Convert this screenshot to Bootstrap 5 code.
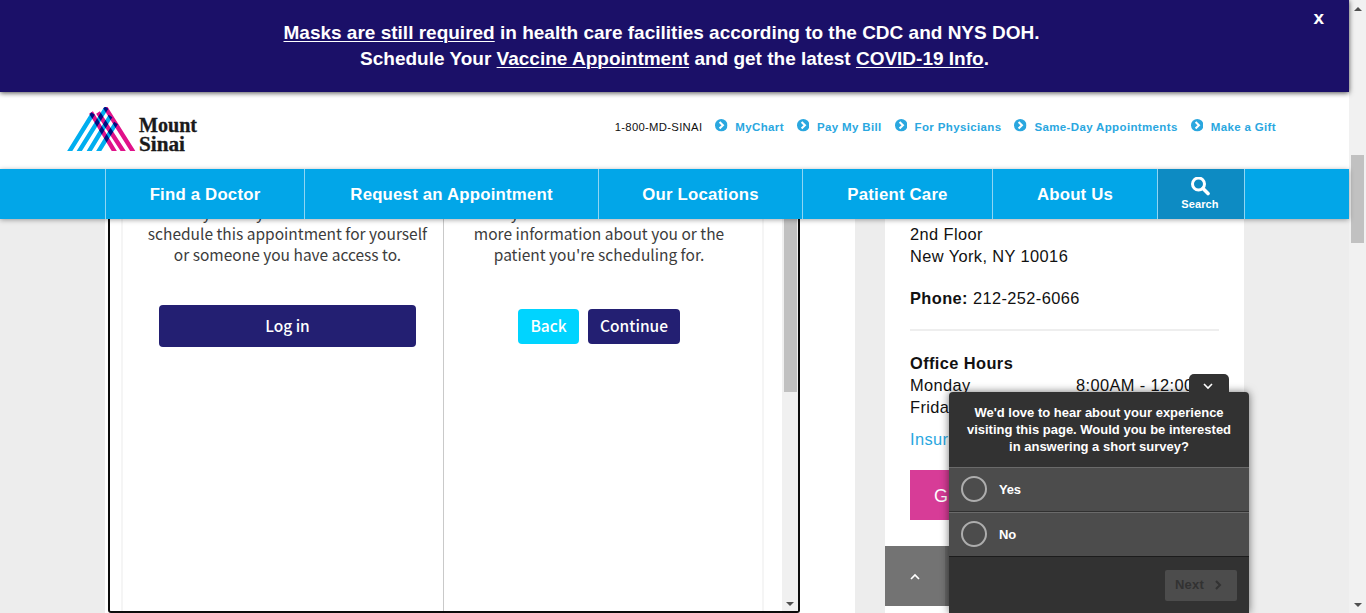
<!DOCTYPE html>
<html lang="en">
<head>
<meta charset="utf-8">
<meta name="viewport" content="width=device-width, initial-scale=1">
<title>Mount Sinai</title>
<link href="https://cdn.jsdelivr.net/npm/bootstrap@5.3.0/dist/css/bootstrap.min.css" rel="stylesheet">
<style>
body{font-family:"Liberation Sans",Arial,sans-serif;font-size:16px;line-height:22px;color:#111;height:613px;overflow:hidden;background:#ededed}
a{text-decoration:none;color:#2aa7df}
.page{width:1349px}
.banner{height:92px;background:#1b1068;color:#fff;font-size:19px;line-height:26px;font-weight:700;padding-top:20px;box-shadow:0 1px 5px rgba(0,0,0,.7);z-index:6}
.banner .first{padding-right:26px}
.banner a{color:#fff;text-decoration:underline;text-decoration-thickness:1px;text-underline-offset:2px}
.banner .shut{right:25px;top:8px;font-size:19px;line-height:20px}
.masthead{height:77px;padding:14px 73px 0 65px;z-index:4}
.quick{font-size:11.5px;line-height:16px;font-weight:700;letter-spacing:.36px;padding-top:13px}
.quick svg{width:12.500px;height:12.500px;margin-right:7.500px;display:block}
.quick .phone{font-weight:400;font-size:11.3px;letter-spacing:.3px}
.quick .ql{margin-left:13px}
.mainnav{height:50px;background:#02a6e8;padding-left:105px;box-shadow:0 1px 5px rgba(0,0,0,.35);z-index:5}
.mainnav a{color:#fff;font-weight:700;font-size:16.800px;letter-spacing:.2px;border-left:1px solid #8fd5f3;padding-top:1px}
.mainnav .find{background:#0d8bc3;font-size:11px;letter-spacing:.1px;line-height:14px;border-right:1px solid #8fd5f3;padding-right:2px}
.n1{width:199px}.n2{width:294px}.n3{width:204px}.n4{width:190px}.n5{width:165px}.n6{width:88px}
.content-area{height:394px;padding-left:105px}
.main-col{width:750px;padding-left:3px}
.frame{width:692px;border:2px solid #0c0c0c;border-top:0;border-radius:0 0 3px 3px;font-family:"Noto Sans CJK JP",sans-serif;font-size:15.5px;line-height:21px;color:#3c3c3c}
.sheet{width:643px;margin-left:11px;border:solid #f5f5f5;border-width:0 2px}
.choice{text-align:center}
.choice p{margin:-17px 0 0;white-space:nowrap}
.c1{width:321px;border-right:1px solid #c9c9c9}
.c1 p{padding-left:9px}
.c2{width:318px;padding-right:8px}
.go{background:#231f72;color:#fff;border-radius:4px;display:flex;align-items:center;justify-content:center;font-weight:500;padding-bottom:1px}
.go.login{width:257px;height:42px;margin:40px auto 0 36px}
.go.back{width:61px;height:35px;background:#00d4ff;padding-bottom:2px}
.go.next{width:92px;height:35px;padding-bottom:2px}
.pair{margin-top:44px;gap:9px}
.innerbar{width:16px;background:#f0f0f0;margin-left:auto}
.innerbar i{display:block;width:13px;height:173px;margin-left:2px;background:#c1c1c1}
.side{width:359px;margin-left:30px;font-size:16.400px;letter-spacing:.4px}
.side-body{padding:4px 25px 0;height:327px}
.rule{height:2px;background:#eee;margin:20px 0 21px}
.pink{width:160px;height:50px;background:#d73c97;color:#fff;font-size:18px;margin-top:20px;padding:15px 24px}
.uptab{height:60px;background:#666}
.uptab div{width:60px;height:60px;background:#737373}
.survey{left:949px;top:392px;width:300px;height:221px;background:#323232;border-radius:4px 4px 0 0;box-shadow:0 0 8px rgba(0,0,0,.55);z-index:8;color:#fff;font-size:13px;font-weight:700}
.survey .flap{right:20px;top:-18px;width:40px;height:20px;padding-right:2px;border-radius:5px 5px 0 0;background:#323232}
.survey .ask{height:75px;padding-top:12px;line-height:17px;text-align:center}
.opt{height:45px;background:#4c4c4c;border-top:1px solid #6a6a6a;border-bottom:1px solid #303030;padding:0 0 1px 12px}
.opt i{width:26px;height:26px;border:2px solid #adadad;border-radius:50%;margin-right:12px}
.opt span{padding-top:2px;letter-spacing:-.2px}
.opt+.opt{border-bottom-color:#1c1c1c}
.fwd{width:72px;height:31px;background:#4c4c4c;color:#323232;border-radius:2px;margin:13px 12px 0 auto;padding:0 15px 1px 10px;letter-spacing:.2px}
.pagebar{width:17px;height:613px;background:#f1f1f1;padding:6px 2px 5px}
.pagebar i{display:block;width:13px;height:88px;background:#c1c1c1}
</style>
<script src="https://cdn.jsdelivr.net/npm/bootstrap@5.3.0/dist/js/bootstrap.bundle.min.js"></script>
</head>
<body class="d-flex">
<svg class="d-none"><symbol id="go" viewBox="0 0 12 12"><circle cx="6" cy="6" r="6" fill="#2aa7df"/><path d="M4.4 2.8 7.6 6 4.4 9.2" fill="none" stroke="#fff" stroke-width="2"/></symbol></svg>
<div class="page flex-shrink-0">
  <div class="banner position-relative text-center">
    <div class="first"><a href="#">Masks are still required</a> in health care facilities according to the CDC and NYS DOH.</div>
    <div>Schedule Your <a href="#">Vaccine Appointment</a> and get the latest <a href="#">COVID-19 Info</a>.</div>
    <span class="shut position-absolute">x</span>
  </div>
  <header class="masthead bg-white d-flex justify-content-between position-relative">
    <svg width="140" height="50" viewBox="65 106 140 50">
      <clipPath id="peaks"><path d="M60 107h80v44H60z"/></clipPath>
      <g fill="none" stroke-width="4.4" clip-path="url(#peaks)">
        <path stroke="#e0128a" d="M91 112.500 115.500 153M98 112.500 124.500 153M105 107 134 153"/>
        <path stroke="#00aeef" style="mix-blend-mode:multiply" d="M68.500 153 93 113.500M78 153 106.500 107.500M88 153 110.500 116M97.500 153 116 123"/>
      </g>
      <g font-family="'Liberation Serif',serif" font-weight="700" font-size="20" fill="#1a1a1a" stroke="#1a1a1a" stroke-width=".3"><text x="139" y="132" textLength="58" lengthAdjust="spacingAndGlyphs">Mount</text><text x="139" y="151" textLength="46" lengthAdjust="spacingAndGlyphs">Sinai</text></g>
    </svg>
    <div class="quick d-flex align-items-start">
      <span class="phone">1-800-MD-SINAI</span>
      <a href="#" class="ql d-flex"><svg><use href="#go"/></svg>MyChart</a>
      <a href="#" class="ql d-flex"><svg><use href="#go"/></svg>Pay My Bill</a>
      <a href="#" class="ql d-flex"><svg><use href="#go"/></svg>For Physicians</a>
      <a href="#" class="ql d-flex"><svg><use href="#go"/></svg>Same-Day Appointments</a>
      <a href="#" class="ql d-flex"><svg><use href="#go"/></svg>Make a Gift</a>
    </div>
  </header>
  <nav class="mainnav d-flex position-relative">
    <a href="#" class="n1 d-flex align-items-center justify-content-center">Find a Doctor</a>
    <a href="#" class="n2 d-flex align-items-center justify-content-center">Request an Appointment</a>
    <a href="#" class="n3 d-flex align-items-center justify-content-center">Our Locations</a>
    <a href="#" class="n4 d-flex align-items-center justify-content-center">Patient Care</a>
    <a href="#" class="n5 d-flex align-items-center justify-content-center">About Us</a>
    <a href="#" class="n6 find d-flex flex-column align-items-center pt-2"><svg width="20" height="20" viewBox="0 0 20 20" fill="none" stroke="#fff"><circle cx="8.500" cy="7" r="6" stroke-width="3"/><path d="m13 11.500 5 5" stroke-width="3.600" stroke-linecap="round"/></svg>Search</a>
  </nav>
  <div class="content-area d-flex">
    <main class="main-col bg-white">
      <div class="frame h-100 d-flex">
        <div class="sheet d-flex">
          <section class="choice c1"><p>you may be able to also<br>schedule this appointment for yourself<br>or someone you have access to.</p><div class="go login">Log in</div></section>
          <section class="choice c2"><p>you will need to enter all<br>more information about you or the<br>patient you're scheduling for.</p>
            <div class="pair d-flex justify-content-center"><div class="go back">Back</div><div class="go next">Continue</div></div></section>
        </div>
        <div class="innerbar d-flex flex-column justify-content-between pb-1"><i></i><svg class="mx-auto" width="8" height="5"><path d="M0 0h8L4 4z" fill="#505050"/></svg></div>
      </div>
    </main>
    <aside class="side bg-white">
      <div class="side-body">
        <div>2nd Floor</div><div>New York, NY 10016</div>
        <div style="margin-top:20px"><b>Phone:</b> 212-252-6066</div>
        <div class="rule"></div>
        <b class="d-block">Office Hours</b>
        <div class="d-flex justify-content-between"><span>Monday</span><span>8:00AM - 12:00PM</span></div>
        <div>Friday</div>
        <a href="#" class="d-block" style="margin-top:10px">Insurance</a>
        <div class="pink">G</div>
      </div>
      <div class="uptab"><div class="d-flex align-items-center justify-content-center"><svg width="10" height="7" fill="none" stroke="#fff" stroke-width="1.700"><path d="m1 6 4-4 4 4"/></svg></div></div>
    </aside>
  </div>
</div>
<div class="pagebar d-flex flex-column"><svg class="mx-auto" width="8" height="5"><path d="M0 5h8L4 1z" fill="#505050"/></svg><i style="margin-top:144px"></i><svg class="mx-auto mt-auto" width="8" height="5"><path d="M0 0h8L4 4z" fill="#505050"/></svg></div>
<div class="survey position-absolute">
  <div class="flap position-absolute d-flex justify-content-center"><svg width="10" height="7" style="margin-top:9px" fill="none" stroke="#fff" stroke-width="1.600"><path d="m1 1 4 4 4-4"/></svg></div>
  <div class="ask">We'd love to hear about your experience<br>visiting this page. Would you be interested<br>in answering a short survey?</div>
  <div class="opt d-flex align-items-center"><i></i><span>Yes</span></div>
  <div class="opt d-flex align-items-center"><i></i><span>No</span></div>
  <div class="fwd d-flex align-items-center justify-content-between">Next<svg width="7" height="10" fill="none" stroke="#323232" stroke-width="2"><path d="m1 1 4 4-4 4"/></svg></div>
</div>
</body>
</html>
